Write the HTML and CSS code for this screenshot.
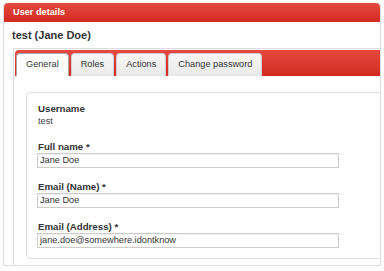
FILE: index.html
```html
<!DOCTYPE html>
<html>
<head>
<meta charset="utf-8">
<link rel="stylesheet" href="styles.css">
</head>
<body>
<div class="panel">
  <div class="panel-header">User details</div>
  <div class="panel-body">
    <h2 class="title">test (Jane Doe)</h2>
    <div class="tabs">
      <ul class="tab-nav">
        <li class="tab active">General</li>
        <li class="tab">Roles</li>
        <li class="tab">Actions</li>
        <li class="tab">Change password</li>
      </ul>
      <div class="tab-panel">
        <div class="fieldset">
          <div class="field">
            <div class="label">Username</div>
            <div class="value">test</div>
          </div>
          <div class="field">
            <div class="label">Full name *</div>
            <div class="input">Jane Doe</div>
          </div>
          <div class="field">
            <div class="label">Email (Name) *</div>
            <div class="input">Jane Doe</div>
          </div>
          <div class="field">
            <div class="label">Email (Address) *</div>
            <div class="input">jane.doe@somewhere.idontknow</div>
          </div>
        </div>
      </div>
    </div>
  </div>
</div>
</body>
</html>
```

FILE: styles.css
```css
* { box-sizing: border-box; }
html, body { margin: 0; padding: 0; background: #fff; }
body {
  font-family: "Liberation Sans", Arial, sans-serif;
  color: #333;
}
.panel {
  margin: 3px 0 0 3px;
  width: 378px;
  border: 1px solid #dcdcdc;
  border-top: none;
  border-radius: 4px 4px 0 0;
  overflow: hidden;
}
.panel-header {
  height: 19px;
  line-height: 19px;
  padding-left: 9px;
  background: linear-gradient(#e5493f, #d22b21);
  color: #fff;
  font-weight: bold;
  font-size: 9.2px;
  border-radius: 4px 4px 0 0;
}
.panel-body {
  padding: 0;
}
.title {
  margin: 7px 0 6px 8px;
  font-size: 11px;
  line-height: 13px;
  font-weight: bold;
  color: #333;
}
.tabs {
  margin-left: 9px;
  width: 420px;
  border: 1px solid #dddddd;
  border-bottom: none;
  padding: 1px 1px 0 1px;
}
.tab-nav {
  list-style: none;
  margin: 0;
  padding: 3px 0 0 1px;
  height: 26px;
  display: flex;
  gap: 2px;
  background: linear-gradient(#e5493f, #d22b21);
  border-radius: 4px 0 0 0;
}
.tab {
  height: 23px;
  line-height: 21px;
  padding: 0 9px;
  font-size: 9.2px;
  color: #333;
  border: 1px solid #cfcfcf;
  border-bottom: none;
  border-radius: 4px 4px 0 0;
  background: linear-gradient(#f7f7f7, #e9e9e9);
}
.tab.active {
  background: #fff;
  border-color: #a8a8a8;
}
.tab-panel {
  padding: 16px 0 6px 11px;
}
.fieldset {
  width: 400px;
  border: 1px solid #dddddd;
  border-radius: 4px;
  padding: 9px 10px 10px 10px;
}
.field + .field { margin-top: 12px; }
.label {
  font-size: 9.7px;
  line-height: 13px;
  font-weight: bold;
  color: #333;
  padding-left: 1px;
}
.value {
  font-size: 9.2px;
  line-height: 13px;
  color: #444;
  padding-left: 1px;
}
.input {
  width: 302px;
  height: 15px;
  line-height: 13px;
  padding: 0 2px;
  border: 1px solid #cccccc;
  box-shadow: inset 0 1px 1px rgba(0,0,0,0.06);
  font-size: 9.2px;
  color: #333;
  background: #fff;
}
```
